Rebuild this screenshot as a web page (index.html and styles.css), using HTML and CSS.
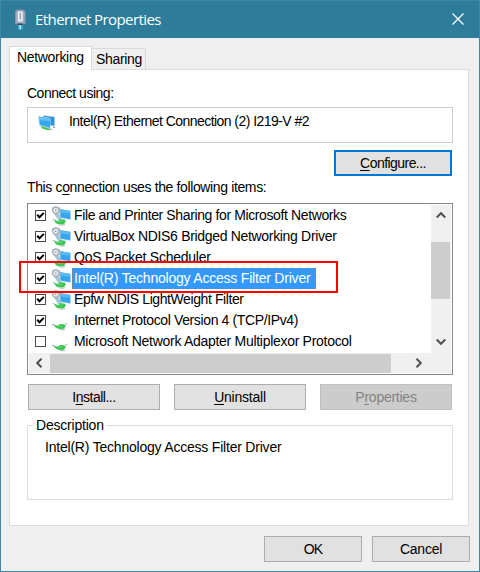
FILE: index.html
```html
<!DOCTYPE html>
<html lang="en">
<head>
<meta charset="utf-8">
<title>Ethernet Properties</title>
<link rel="stylesheet" href="styles.css">
</head>
<body>
<svg class="defs" width="0" height="0" aria-hidden="true">
  <symbol id="check" viewBox="0 0 9 9"><path d="M1.200 3.700 3.500 6.200 7.800 1.900" fill="none" stroke="#000" stroke-width="2"/></symbol>
  <symbol id="plug" viewBox="0 0 20 20">
    <path class="i-plug" d="M2 13.500 6.500 14.800 9 13 13 13.200 15 14.500 13 17.800 8 18 5 16.800Z"/>
    <path d="M1 13.200 4 14M14 12.700 16.500 13M9 18.700 14 18.300" stroke="#b4bdb8" stroke-width="1.200"/>
    <path d="M7 15.300 11 14.700" stroke="#6fdc7e" stroke-width=".8"/>
  </symbol>
  <symbol id="service" viewBox="0 0 20 20">
    <path class="i-frame" d="M8 2.700 19.700 4.500V14L9 12.200Z"/>
    <path class="i-screen" d="M9 3.200 19.300 5V13.300L9.500 11.500Z"/>
    <path class="i-shine" d="M9 3.200 19.300 5V7.500L9 6.800Z"/>
    <path class="i-arm" d="M3 7.500 8 8 11 13.500 7.500 14.500Z"/>
    <path class="i-cam" d="M1 1.500 4.500 0 9 1.500 9.500 5.500 7 8.500 3 8 .8 5Z"/>
    <circle class="i-lens" cx="4.800" cy="4.200" r="2.300"/>
    <circle cx="4.800" cy="4.200" r=".8" fill="#6f7f88"/>
    <path class="i-plug" d="M2.500 13.500 7 15 9 13.300 13.500 13.600 15 15 13 18.300 8 18.500 5 17.200Z"/>
    <path d="M1.500 13.500 4 14.300M9 19.200 14 18.800" stroke="#b9c2bd" stroke-width="1.200"/>
    <path d="M7 15.600 11 15" stroke="#6fdc7e" stroke-width=".8"/>
  </symbol>
</svg>
<main class="window">
  <header class="titlebar">
    <svg class="title-icon" width="12" height="22" viewBox="0 0 12 22">
      <path d="M3.500 1h5L11 2.500V15H1.500V2.500Z" fill="#9eabc0" stroke="#8593ad"/>
      <path d="M3.800 2.500h5v10h-5Z" fill="#e8ebf3"/><path d="M6.300 4v6.500" stroke="#8d97b0" stroke-width="1.200"/>
      <path d="M3.500 14.500h5.500V16h-5.500Z" fill="#34485c"/><path d="M4 16h5v4.500H4Z" fill="#2fa9dc"/><path d="M6.200 16v4.500" stroke="#b5edff" stroke-width="1.500"/>
    </svg>
    <h1 class="title">Ethernet Properties</h1>
    <svg class="close" width="12" height="12" viewBox="0 0 12 12"><path d="M.5.5l11 11M11.500.5l-11 11" stroke="#fff" stroke-width="1.200"/></svg>
  </header>
  <nav class="tabs">
    <span class="tab tab-active">Networking</span>
    <span class="tab">Sharing</span>
  </nav>
  <section class="panel">
    <div class="label t-using">Connect using:</div>
    <div class="adapter">
      <svg width="20" height="18" viewBox="0 0 20 18">
        <path d="M2 11 12 13.500 10.500 16.500 4 14.500Z" fill="#42c95a"/>
        <path d="M5 1 17 2.500v10.500L7 11Z" fill="#d2dce2"/><path d="M5.500 1.800 16.300 3.300v8.500L7 10Z" fill="#2b93da"/>
        <path d="M.2 2 12.500 4v11L1.200 11.500Z" fill="#c3d0d8"/><path d="M1 2.800 12 4.700v9L1.800 10.700Z" fill="#35a9ef"/>
        <path d="M1 2.800 12 4.700v2.500L1.500 6Z" fill="#64c2f7"/><path d="M11 15.800 14 15M15 13.500 17 13.500" stroke="#8f999d"/>
      </svg>
      <span class="t-adapter">Intel(R) Ethernet Connection (2) I219-V #2</span>
    </div>
    <button class="btn configure"><u>C</u>onfigure...</button>
    <div class="label items-label">This c<u>o</u>nnection uses the following items:</div>
    <div class="list">
      <ul class="rows">
        <li class="row"><svg class="cb"><use href="#check"/></svg><svg class="ico"><use href="#service"/></svg><span class="name t-r1">File and Printer Sharing for Microsoft Networks</span></li>
        <li class="row"><svg class="cb"><use href="#check"/></svg><svg class="ico"><use href="#service"/></svg><span class="name t-r2">VirtualBox NDIS6 Bridged Networking Driver</span></li>
        <li class="row"><svg class="cb"><use href="#check"/></svg><svg class="ico"><use href="#service"/></svg><span class="name t-r3">QoS Packet Scheduler</span></li>
        <li class="row selected"><svg class="cb"><use href="#check"/></svg><svg class="ico"><use href="#service"/></svg><span class="name t-r4">Intel(R) Technology Access Filter Driver</span></li>
        <li class="row"><svg class="cb"><use href="#check"/></svg><svg class="ico"><use href="#service"/></svg><span class="name t-r5">Epfw NDIS LightWeight Filter</span></li>
        <li class="row"><svg class="cb"><use href="#check"/></svg><svg class="ico"><use href="#plug"/></svg><span class="name t-r6">Internet Protocol Version 4 (TCP/IPv4)</span></li>
        <li class="row"><svg class="cb"></svg><svg class="ico"><use href="#plug"/></svg><span class="name t-r7">Microsoft Network Adapter Multiplexor Protocol</span></li>
      </ul>
      <div class="vbar">
        <svg width="10" height="8" viewBox="0 0 10 8"><path d="M.7 6.500 5 2.200 9.300 6.500" fill="none" stroke="#505050" stroke-width="2"/></svg>
        <div class="vthumb"></div>
        <svg width="10" height="8" viewBox="0 0 10 8"><path d="M.7 1.500 5 5.800 9.300 1.500" fill="none" stroke="#505050" stroke-width="2"/></svg>
      </div>
      <div class="hbar">
        <svg width="8" height="10" viewBox="0 0 8 10"><path d="M6.500.7 2.200 5 6.500 9.300" fill="none" stroke="#505050" stroke-width="2"/></svg>
        <div class="hthumb"></div>
        <svg width="8" height="10" viewBox="0 0 8 10"><path d="M1.500.7 5.800 5 1.500 9.300" fill="none" stroke="#505050" stroke-width="2"/></svg>
      </div>
      <div class="highlight"></div>
    </div>
    <div class="actions">
      <button class="btn t-inst">I<u>n</u>stall...</button>
      <button class="btn t-unin"><u>U</u>ninstall</button>
      <button class="btn t-prop" disabled>P<u>r</u>operties</button>
    </div>
    <fieldset class="group">
      <legend>Description</legend>
      <p>Intel(R) Technology Access Filter Driver</p>
    </fieldset>
  </section>
  <footer class="footer">
    <button class="btn t-ok">OK</button>
    <button class="btn t-cancel">Cancel</button>
  </footer>
</main>
</body>
</html>
```

FILE: styles.css
```css
* { box-sizing: border-box; }
body {
  margin: 0;
  font: 14px/16px "Liberation Sans", Arial, sans-serif;
  color: #000;
}
u { text-underline-offset: 2px; text-decoration-thickness: 1px; text-decoration-skip-ink: none; }
.defs { position: absolute; }
.window {
  width: 480px;
  height: 572px;
  border: 1px solid #3d88a4;
  background: #efefef;
  display: flex;
  flex-direction: column;
}
.titlebar {
  height: 37px;
  flex: none;
  display: flex;
  align-items: center;
  padding: 0 15px 0 13px;
  background: #2d7d9a;
  color: #fff;
}
.title-icon { flex: none; }
.title {
  flex: 1;
  margin: 0 0 1px 9px;
  font: 15px/20px "Open Sans", "Noto Sans", sans-serif;
  letter-spacing: -0.58px;
}
.close { margin-bottom: 1px; }
.tabs {
  display: flex;
  align-items: flex-end;
  height: 31px;
  flex: none;
  padding-left: 8px;
}
.tab {
  height: 21px;
  width: 54px;
  border: 1px solid #d9d9d9;
  border-width: 1px 1px 0 0;
  padding: 2px 0 0 4px;
  white-space: nowrap;
  letter-spacing: -0.32px;
}
.tab-active {
  position: relative;
  height: 24px;
  width: 83px;
  margin-bottom: -1px;
  border-left-width: 1px;
  background: #fff;
  padding: 2px 0 0 7px;
}
.panel {
  margin: 0 10px 0 8px;
  height: 457px;
  flex: none;
  border: 1px solid #dcdcdc;
  background: #fff;
  padding: 15px 15px 0 17px;
  display: flex;
  flex-direction: column;
}
.label { height: 16px; white-space: nowrap; }
.adapter {
  height: 36px;
  margin-top: 6px;
  border: 1px solid #ccc;
  display: flex;
  align-items: flex-start;
  padding: 5px 0 0 10px;
  gap: 11px;
  white-space: nowrap;
}
.adapter svg { margin-top: 1px; }
.btn {
  height: 26px;
  padding: 0;
  border: 1px solid #adadad;
  background: #e1e1e1;
  color: #000;
  font: inherit;
}
.btn:disabled { background: #ccc; border-color: #bfbfbf; color: #838383; }
.configure {
  width: 118px;
  margin: 7px 1px 0 auto;
  border: 2px solid #0078d7;
  letter-spacing: -0.55px;
}
.items-label { margin-top: 3px; letter-spacing: -0.37px; }
.t-using { letter-spacing: -0.49px; }
.t-adapter { letter-spacing: -0.55px; }
.t-r1 { letter-spacing: -0.38px; }
.t-r2 { letter-spacing: -0.32px; }
.t-r3 { letter-spacing: -0.25px; }
.t-r4 { letter-spacing: -0.21px; }
.t-r5 { letter-spacing: -0.41px; }
.t-r6 { letter-spacing: -0.37px; }
.t-r7 { letter-spacing: -0.29px; }
.t-inst { letter-spacing: -0.5px; }
.t-unin { letter-spacing: -0.22px; }
.t-prop { letter-spacing: -0.25px; }
.t-ok { letter-spacing: -0.8px; }
.t-cancel { letter-spacing: -0.25px; }
.list {
  position: relative;
  height: 172px;
  margin-top: 8px;
  border: 1px solid #828790;
  padding: 1px;
  display: grid;
  grid-template: 148px 20px / 402px 20px;
  background: #fff;
}
.rows { margin: 0; padding: 0; list-style: none; overflow: hidden; }
.row {
  height: 21px;
  display: flex;
  align-items: center;
  padding-left: 6px;
  white-space: nowrap;
}
.cb { width: 11px; height: 11px; margin-bottom: 1px; border: 1px solid #4a4a4a; flex: none; }
.ico { width: 20px; height: 20px; margin-left: 5px; flex: none; }
.i-plug { fill: #3cc653; }
.i-frame { fill: #d3e0e7; }
.i-screen { fill: #35a6ee; }
.i-shine { fill: #5bbaf3; }
.i-arm { fill: #a3c6d6; }
.i-cam { fill: #aab6be; }
.i-lens { fill: #eef3f5; }
.selected .i-plug { fill: #38b5a6; }
.selected .i-frame { fill: #86bdf3; }
.selected .i-screen, .selected .i-shine { fill: #359ff4; }
.selected .i-arm, .selected .i-cam { fill: #6aaee6; }
.selected .i-lens { fill: #9bcbf7; }
.name { margin-left: 1px; height: 21px; padding: 2px 6px 0 2px; }
.selected .name {
  background: #3399ff;
  color: #fff;
  outline: 1px dotted rgba(214, 112, 32, 0.75);
  outline-offset: -1px;
}
.vbar {
  background: #f0f0f0;
  padding: 6px 1px 0 0;
  display: flex;
  flex-direction: column;
  align-items: center;
}
.vthumb { width: 19px; height: 57px; margin: 23px 0 39px; background: #cdcdcd; }
.hbar {
  grid-column: 1 / 3;
  background: #f0f0f0;
  display: flex;
  align-items: center;
  padding-left: 6px;
}
.hthumb { height: 19px; width: 341px; margin: 0 24px 0 7px; background: #cdcdcd; }
.highlight {
  position: absolute;
  left: -9px;
  top: 57px;
  width: 319px;
  height: 32px;
  border: 2px solid #f00;
}
.actions {
  display: grid;
  grid-template-columns: repeat(3, 132px);
  gap: 14px;
  margin: 9px 0 0 1px;
}
.group {
  margin: 7px 0 0;
  height: 83px;
  border: 1px solid #dcdcdc;
  padding: 0 0 0 17px;
  letter-spacing: -0.21px;
}
.group legend { margin-left: -11px; padding: 0 2px; }
.group p { margin: 6px 0 0; white-space: nowrap; }
.footer {
  display: flex;
  justify-content: flex-end;
  gap: 10px;
  padding: 10px 9px 0 0;
}
.footer .btn { width: 98px; }
```
